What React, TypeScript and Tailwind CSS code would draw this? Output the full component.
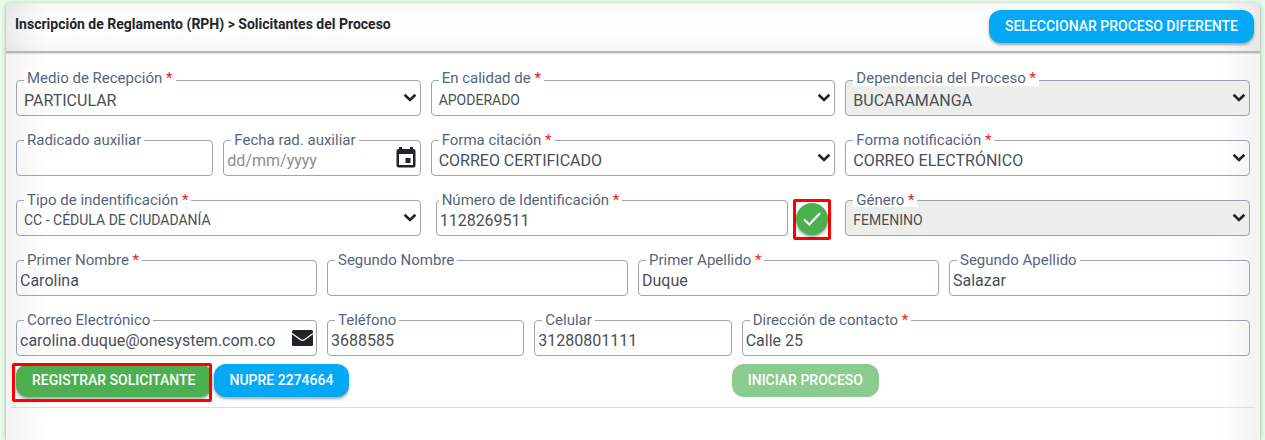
import type { ReactNode } from "react";

type FieldProps = {
  id: string;
  label: string;
  span: string;
  labelPos?: string;
  required?: boolean;
  children: ReactNode;
};

type SelectProps = {
  id: string;
  label: string;
  span: string;
  value: string;
  labelPos?: string;
  small?: boolean;
  disabled?: boolean;
};

type InputProps = {
  id: string;
  label: string;
  span: string;
  value?: string;
  labelPos?: string;
  required?: boolean;
  type?: string;
  placeholder?: string;
  icon?: ReactNode;
};

function Field({ id, label, span, labelPos = "-top-2 left-2 h-[15px]", required, children }: FieldProps) {
  return (
    <div className={`relative ${span}`}>
      <label
        htmlFor={id}
        className={`absolute z-10 whitespace-nowrap bg-white px-[3px] text-[15px] leading-4 text-[#56657b] ${labelPos}`}
      >
        {label}
        {required && <span className="text-[#f01818]"> *</span>}
      </label>
      {children}
    </div>
  );
}

function SelectField({ id, label, span, value, labelPos, small, disabled }: SelectProps) {
  return (
    <Field id={id} label={label} span={span} labelPos={labelPos} required>
      <select
        id={id}
        disabled={disabled}
        defaultValue={value}
        className={`block h-9 w-full appearance-none rounded border border-[#9ca3af] pr-8 pl-[7px] text-[#495057] disabled:bg-[#ebeeeb] disabled:opacity-100 ${
          small ? "pt-1 text-sm" : "pt-[6px] text-base"
        }`}
      >
        <option>{value}</option>
      </select>
      <svg
        viewBox="0 0 14 10"
        className="pointer-events-none absolute top-[13px] right-1 h-[10px] w-[14px]"
        fill="none"
        stroke="#212529"
        strokeWidth="2.6"
      >
        <path d="M1.6 1.8 L7 7 L12.4 1.8" />
      </svg>
    </Field>
  );
}

function InputField({ id, label, span, value, labelPos, required, type = "text", placeholder, icon }: InputProps) {
  return (
    <Field id={id} label={label} span={span} labelPos={labelPos} required={required}>
      <input
        id={id}
        type={type}
        defaultValue={value}
        placeholder={placeholder}
        className="block h-9 w-full rounded border border-[#9ca3af] pt-1 pl-[3px] text-base text-[#495057] placeholder:text-[#8e8e8e]"
      />
      {icon}
    </Field>
  );
}

const CalendarIcon = () => (
  <button type="button" aria-label="Abrir calendario" className="absolute top-[7px] right-[5px]">
    <svg viewBox="0 0 20 22" className="h-[22px] w-5">
      <path
        fill="#212529"
        d="M3 0h3v2h8V0h3v2h.5A2 2 0 0 1 19.5 4v14.500a2 2 0 0 1-2 2h-15a2 2 0 0 1-2-2V4a2 2 0 0 1 2-2H3zM3 7v11h14V7zM9.500 11h5v5h-5z"
        fillRule="evenodd"
      />
    </svg>
  </button>
);

const MailIcon = () => (
  <svg viewBox="0 0 21 16" className="pointer-events-none absolute top-[10px] right-1 h-4 w-[21px]">
    <rect width="21" height="16" rx="1.500" fill="#212529" />
    <path d="M0 3.500 L8.300 9.600 Q10.500 11.200 12.700 9.600 L21 3.500" fill="none" stroke="#fff" strokeWidth="1.200" />
  </svg>
);

const button =
  "h-[33px] whitespace-nowrap rounded-xl px-4 pb-[2px] text-sm font-medium text-white shadow-[0_2px_3px_rgba(0,0,0,0.35)]";

const topLabel = "-top-[10px] left-2 h-4";

export default function App() {
  return (
    <div className="min-h-screen bg-[#e9fbec] px-1 pt-[3px] font-[Roboto,sans-serif]">
      <main className="ml-px min-h-[calc(100vh-3px)] rounded-t-md border-x border-[#ccd6ce] bg-[linear-gradient(to_right,#f2f2f2,#fff_40px,#fff_calc(100%-40px),#f2f2f2)] shadow-[0_0_4px_rgba(0,0,0,0.2)]">
        <header className="flex h-[50px] items-start justify-between rounded-t-md border-b-2 border-[#b8b8b8] pr-[6px] pl-[9px] shadow-[inset_0_0_30px_rgba(0,0,0,0.07),0_1px_1px_rgba(0,0,0,0.12)]">
          <h1 className="pt-[11px] text-sm leading-5 font-bold text-[#212529]">
            Inscripción de Reglamento (RPH) &gt; Solicitantes del Proceso
          </h1>
          <button type="button" className={`${button} mt-[7px] bg-[#03a9f4]`}>
            SELECCIONAR PROCESO DIFERENTE
          </button>
        </header>

        <form className="px-[10px] pt-[27px]">
          <div className="grid grid-cols-12 gap-x-[10px] gap-y-6">
            <SelectField id="medio" label="Medio de Recepción" span="col-span-4" labelPos={topLabel} value="PARTICULAR" />
            <SelectField id="calidad" label="En calidad de" span="col-span-4" labelPos={topLabel} value="APODERADO" small />
            <SelectField
              id="dependencia"
              label="Dependencia del Proceso"
              span="col-span-4"
              labelPos={topLabel}
              value="BUCARAMANGA"
              disabled
            />

            <InputField id="radicado" label="Radicado auxiliar" span="col-span-2" />
            <InputField
              id="fecha"
              label="Fecha rad. auxiliar"
              span="col-span-2"
              placeholder="dd/mm/yyyy"
              icon={<CalendarIcon />}
            />
            <SelectField id="citacion" label="Forma citación" span="col-span-4" value="CORREO CERTIFICADO" />
            <SelectField id="notificacion" label="Forma notificación" span="col-span-4" value="CORREO ELECTRÓNICO" />

            <SelectField id="tipo" label="Tipo de indentificación" span="col-span-4" value="CC - CÉDULA DE CIUDADANÍA" small />
            <div className="col-span-4 flex items-start gap-[5px] pr-1 pl-[5px]">
              <InputField
                id="numero"
                label="Número de Identificación"
                span="flex-1"
                labelPos="-top-2 left-[3px] h-[15px]"
                value="1128269511"
                required
              />
              <div className="-mt-px -mb-1 flex h-[41px] w-[38px] justify-center rounded-[2px] border-3 border-[#fe0000] pt-px">
                <button
                  type="button"
                  aria-label="Validar identificación"
                  className="flex size-8 items-center justify-center rounded-full bg-[#4caf50] shadow-[0_2px_3px_rgba(0,0,0,0.35)]"
                >
                  <svg viewBox="0 0 18 14" className="h-[14px] w-[18px]" fill="none" stroke="#fff" strokeWidth="2">
                    <path d="M1 7.500 L6.300 12.500 L17 1.200" />
                  </svg>
                </button>
              </div>
            </div>
            <SelectField id="genero" label="Género" span="col-span-4" value="FEMENINO" small disabled />

            <InputField id="nombre1" label="Primer Nombre" span="col-span-3" value="Carolina" required />
            <InputField id="nombre2" label="Segundo Nombre" span="col-span-3" />
            <InputField id="apellido1" label="Primer Apellido" span="col-span-3" value="Duque" required />
            <InputField id="apellido2" label="Segundo Apellido" span="col-span-3" value="Salazar" />

            <InputField
              id="correo"
              label="Correo Electrónico"
              span="col-span-3"
              type="email"
              value="carolina.duque@onesystem.com.co"
              icon={<MailIcon />}
            />
            <InputField id="telefono" label="Teléfono" span="col-span-2" value="3688585" />
            <InputField id="celular" label="Celular" span="col-span-2" value="31280801111" />
            <InputField id="direccion" label="Dirección de contacto" span="col-span-5" value="Calle 25" required />
          </div>

          <div className="mt-2 flex items-start">
            <div className="relative flex">
              <button type="button" className={`${button} bg-[#4caf50]`}>
                REGISTRAR SOLICITANTE
              </button>
              <span className="pointer-events-none absolute -top-px right-0 -bottom-[5px] -left-1 rounded-[2px] border-3 border-[#fe0000]" />
            </div>
            <button type="button" className={`${button} ml-[2px] bg-[#03a9f4]`}>
              NUPRE 2274664
            </button>
            <div className="ml-auto w-[42%]">
              <button
                type="button"
                disabled
                className="h-[33px] whitespace-nowrap rounded-xl bg-[#8ccb8f] px-4 pb-[2px] text-sm font-medium text-white"
              >
                INICIAR PROCESO
              </button>
            </div>
          </div>
        </form>
        <hr className="mx-[5px] mt-[10px] border-[#dedede]" />
      </main>
    </div>
  );
}
